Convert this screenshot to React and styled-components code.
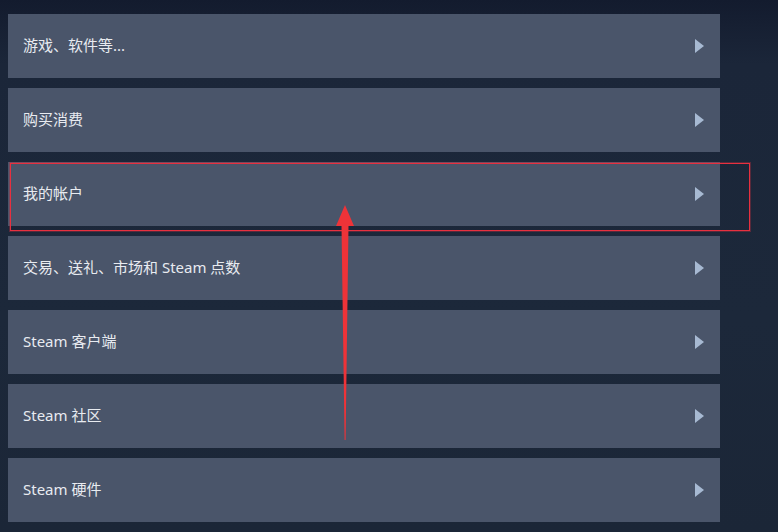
import React from 'react';
import styled, { createGlobalStyle } from 'styled-components';

const GlobalStyle = createGlobalStyle`
  html, body {
    margin: 0;
    padding: 0;
    background: #1b2638;
  }
  body {
    font-family: "Noto Sans", "Noto Sans CJK SC", sans-serif;
  }
`;

const Page = styled.div`
  position: relative;
  width: 778px;
  height: 532px;
  overflow: hidden;
  background: linear-gradient(180deg, #131b2e 0%, #1b2639 12%, #1c283a 60%, #1b2637 100%);
`;

const List = styled.div`
  display: flex;
  flex-direction: column;
  gap: 10px;
  width: 712px;
  padding: 14px 0 0 8px;
`;

const Row = styled.div`
  height: 64px;
  display: flex;
  align-items: center;
  justify-content: space-between;
  padding: 0 16px 3px 15px;
  box-sizing: border-box;
  background: #4a556a;
  color: #e8ebf0;
  font-size: 15px;
  cursor: pointer;
`;

const Chevron = styled.span`
  width: 0;
  height: 0;
  margin-top: 3px;
  border-top: 7px solid transparent;
  border-bottom: 7px solid transparent;
  border-left: 9px solid #a7b9d2;
`;

const Highlight = styled.div`
  position: absolute;
  z-index: 2;
  left: 10px;
  top: 163px;
  width: 740px;
  height: 68px;
  box-sizing: border-box;
  border: 1px solid #e8303f;
  box-shadow: 0 0 0 1px rgba(232, 48, 63, 0.3);
  pointer-events: none;
`;

const Arrow = styled.svg`
  position: absolute;
  z-index: 3;
  left: 330px;
  top: 200px;
  pointer-events: none;
`;

const items = [
  '游戏、软件等...',
  '购买消费',
  '我的帐户',
  '交易、送礼、市场和 Steam 点数',
  'Steam 客户端',
  'Steam 社区',
  'Steam 硬件',
];

export default function App() {
  return (
    <Page>
      <GlobalStyle />
      <List>
        {items.map((label) => (
          <Row key={label}>
            <span>{label}</span>
            <Chevron />
          </Row>
        ))}
      </List>
      <Highlight />
      <Arrow width="32" height="245" viewBox="0 0 32 245">
        <path d="M15 5 L24 26 L18.5 26 L15.6 240 L14.6 240 L11.5 26 L6 26 Z" fill="#ee3338" />
      </Arrow>
    </Page>
  );
}
